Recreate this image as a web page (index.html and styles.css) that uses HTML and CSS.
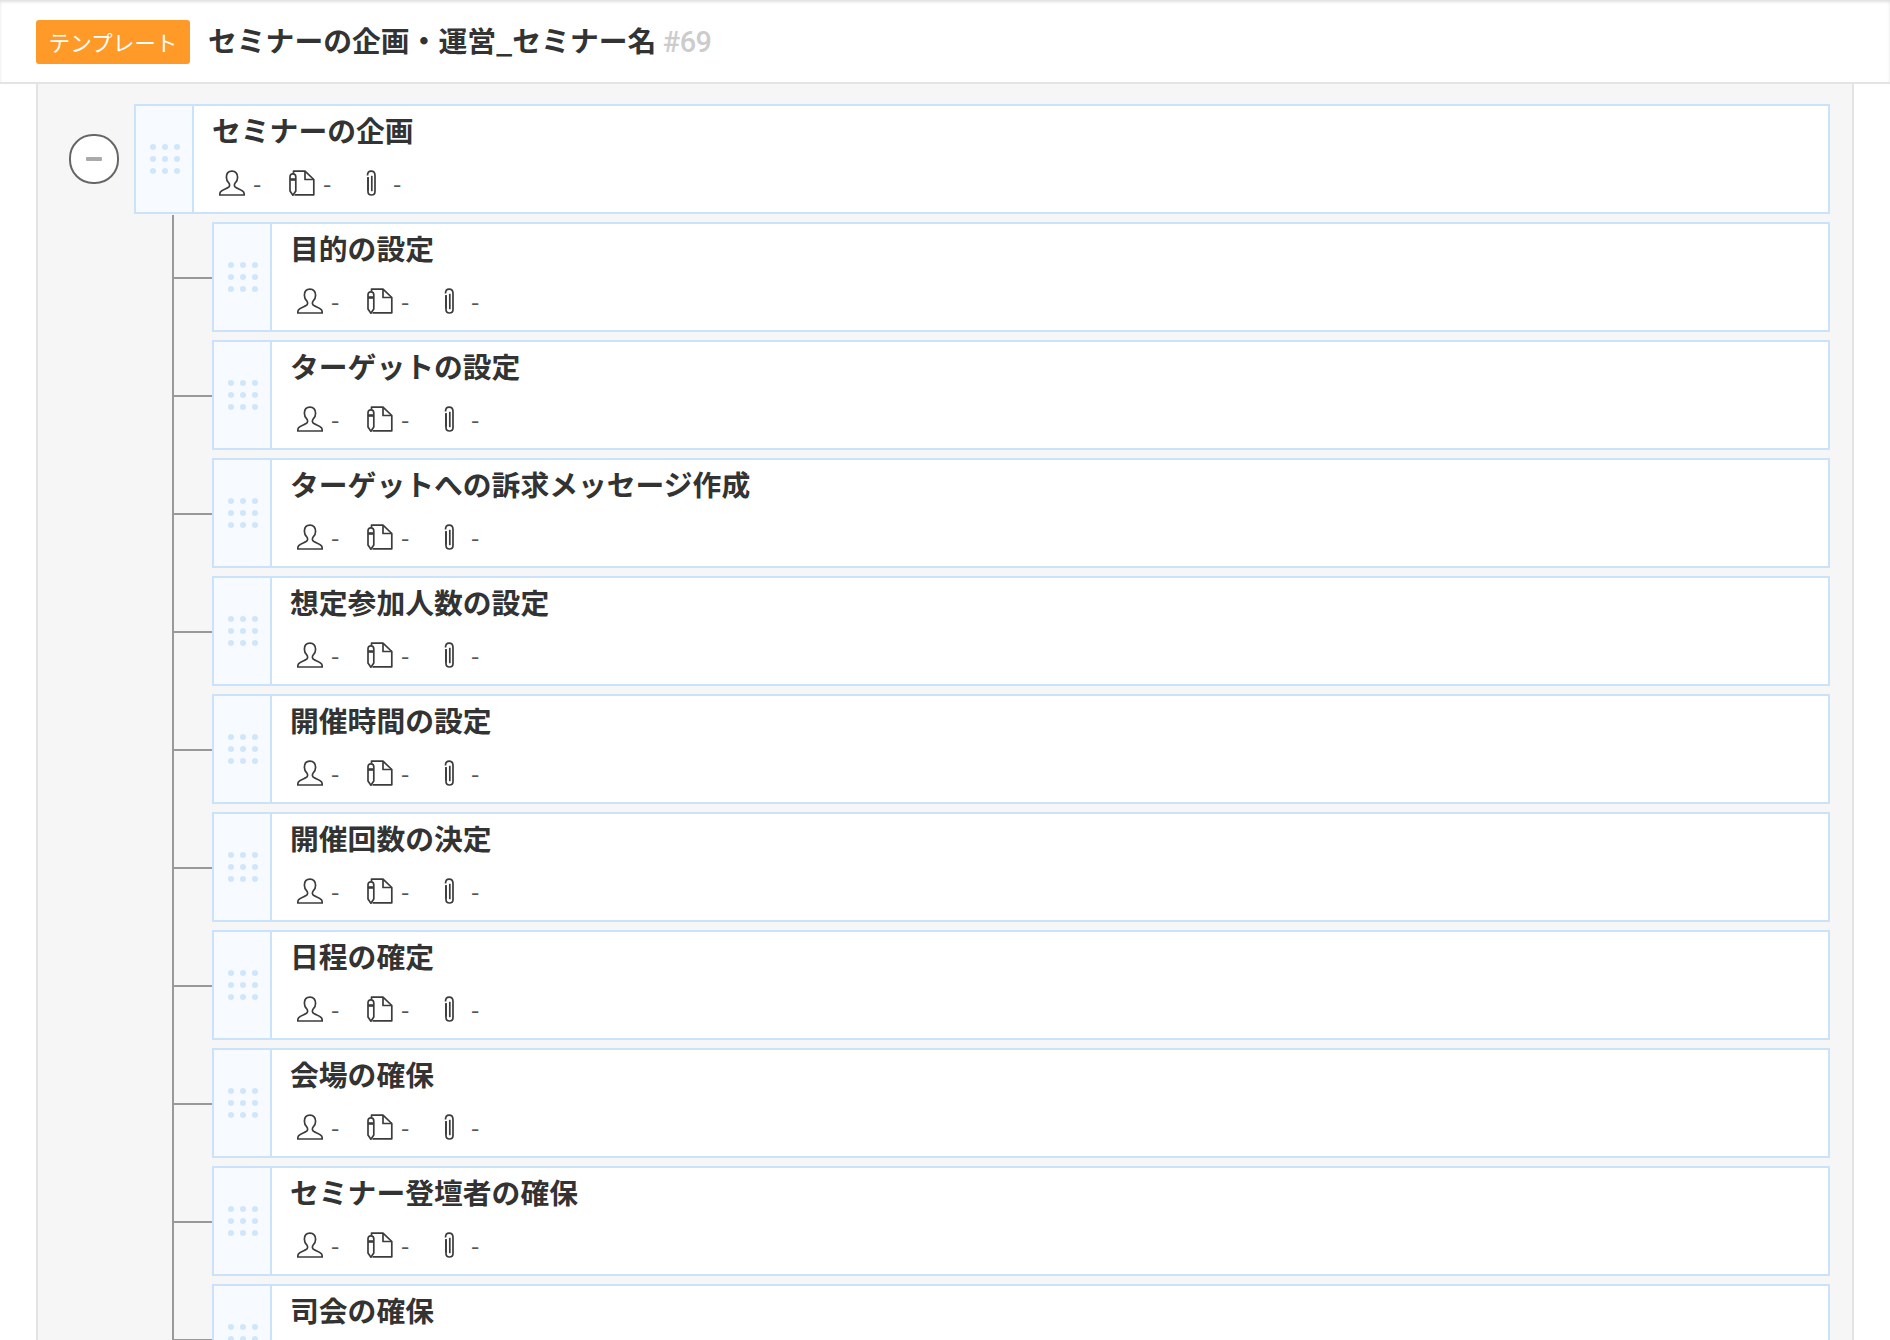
FILE: index.html
```html
<!DOCTYPE html>
<html lang="ja">
<head>
<meta charset="utf-8">
<title>セミナーの企画・運営</title>
<link rel="stylesheet" href="styles.css">
</head>
<body>
<svg class="defs" width="0" height="0" aria-hidden="true">
  <symbol id="i-user" viewBox="0 0 26 26">
    <path d="M13 1.200c-3.600 0-5.600 2.600-5.600 6 0 2.600 1 4.600 2.500 6 .6.6.7 1.300.7 2.200 0 1.100-.7 1.800-1.900 2.400-2.200 1.100-5.600 2-7.100 4-.6.8-.8 1.900-.9 3.200h24.600c-.1-1.300-.3-2.400-.9-3.200-1.500-2-4.900-2.900-7.100-4-1.200-.6-1.900-1.300-1.900-2.400 0-.9.1-1.600.7-2.200 1.500-1.400 2.500-3.400 2.500-6 0-3.400-2-6-5.600-6z"/>
  </symbol>
  <symbol id="i-doc" viewBox="0 0 26 26">
    <path d="M4.500 3.500V1.200h11.500l8.800 8.300v15.300H5.500"/>
    <path d="M16 1.200v8.300h8.800"/>
    <path d="M1 7c0-2 1-3.200 2.900-3.200S6.800 5 6.800 7v14l-2.900 4.200L1 21z"/>
    <path d="M1 9.500h5.800" stroke-width="2.600"/>
  </symbol>
  <symbol id="i-clip" viewBox="0 0 26 26">
    <path d="M9 7.500v14c0 2.200 1.500 3.500 3.500 3.500s3.500-1.300 3.500-3.500V5.500c0-2.700-1.600-4.300-3.900-4.300S8.500 2.800 8.500 5.500"/>
    <path d="M9 7v13.500"/>
    <path d="M12.800 5.800v15.400"/>
  </symbol>
</svg>

<header class="page-head">
  <span class="badge">テンプレート</span>
  <h1 class="page-title">セミナーの企画・運営_セミナー名 <span class="page-id">#69</span></h1>
</header>

<main class="panel">
  <div class="root-row">
    <button class="toggle" type="button" aria-label="折りたたむ"><span class="minus"></span></button>
    <article class="card">
      <div class="handle"><span class="dots"><i></i><i></i><i></i><i></i><i></i><i></i><i></i><i></i><i></i></span></div>
      <div class="body">
        <h2 class="title">セミナーの企画</h2>
        <div class="meta">
          <span class="meta-item"><svg class="icon"><use href="#i-user"/></svg>-</span>
          <span class="meta-item"><svg class="icon"><use href="#i-doc"/></svg>-</span>
          <span class="meta-item"><svg class="icon"><use href="#i-clip"/></svg>-</span>
        </div>
      </div>
    </article>
  </div>

  <div class="children" id="children">
    <article class="card child"><div class="handle"><span class="dots"><i></i><i></i><i></i><i></i><i></i><i></i><i></i><i></i><i></i></span></div><div class="body"><h2 class="title">目的の設定</h2><div class="meta"><span class="meta-item"><svg class="icon"><use href="#i-user"/></svg>-</span><span class="meta-item"><svg class="icon"><use href="#i-doc"/></svg>-</span><span class="meta-item"><svg class="icon"><use href="#i-clip"/></svg>-</span></div></div></article>
    <article class="card child"><div class="handle"><span class="dots"><i></i><i></i><i></i><i></i><i></i><i></i><i></i><i></i><i></i></span></div><div class="body"><h2 class="title">ターゲットの設定</h2><div class="meta"><span class="meta-item"><svg class="icon"><use href="#i-user"/></svg>-</span><span class="meta-item"><svg class="icon"><use href="#i-doc"/></svg>-</span><span class="meta-item"><svg class="icon"><use href="#i-clip"/></svg>-</span></div></div></article>
    <article class="card child"><div class="handle"><span class="dots"><i></i><i></i><i></i><i></i><i></i><i></i><i></i><i></i><i></i></span></div><div class="body"><h2 class="title">ターゲットへの訴求メッセージ作成</h2><div class="meta"><span class="meta-item"><svg class="icon"><use href="#i-user"/></svg>-</span><span class="meta-item"><svg class="icon"><use href="#i-doc"/></svg>-</span><span class="meta-item"><svg class="icon"><use href="#i-clip"/></svg>-</span></div></div></article>
    <article class="card child"><div class="handle"><span class="dots"><i></i><i></i><i></i><i></i><i></i><i></i><i></i><i></i><i></i></span></div><div class="body"><h2 class="title">想定参加人数の設定</h2><div class="meta"><span class="meta-item"><svg class="icon"><use href="#i-user"/></svg>-</span><span class="meta-item"><svg class="icon"><use href="#i-doc"/></svg>-</span><span class="meta-item"><svg class="icon"><use href="#i-clip"/></svg>-</span></div></div></article>
    <article class="card child"><div class="handle"><span class="dots"><i></i><i></i><i></i><i></i><i></i><i></i><i></i><i></i><i></i></span></div><div class="body"><h2 class="title">開催時間の設定</h2><div class="meta"><span class="meta-item"><svg class="icon"><use href="#i-user"/></svg>-</span><span class="meta-item"><svg class="icon"><use href="#i-doc"/></svg>-</span><span class="meta-item"><svg class="icon"><use href="#i-clip"/></svg>-</span></div></div></article>
    <article class="card child"><div class="handle"><span class="dots"><i></i><i></i><i></i><i></i><i></i><i></i><i></i><i></i><i></i></span></div><div class="body"><h2 class="title">開催回数の決定</h2><div class="meta"><span class="meta-item"><svg class="icon"><use href="#i-user"/></svg>-</span><span class="meta-item"><svg class="icon"><use href="#i-doc"/></svg>-</span><span class="meta-item"><svg class="icon"><use href="#i-clip"/></svg>-</span></div></div></article>
    <article class="card child"><div class="handle"><span class="dots"><i></i><i></i><i></i><i></i><i></i><i></i><i></i><i></i><i></i></span></div><div class="body"><h2 class="title">日程の確定</h2><div class="meta"><span class="meta-item"><svg class="icon"><use href="#i-user"/></svg>-</span><span class="meta-item"><svg class="icon"><use href="#i-doc"/></svg>-</span><span class="meta-item"><svg class="icon"><use href="#i-clip"/></svg>-</span></div></div></article>
    <article class="card child"><div class="handle"><span class="dots"><i></i><i></i><i></i><i></i><i></i><i></i><i></i><i></i><i></i></span></div><div class="body"><h2 class="title">会場の確保</h2><div class="meta"><span class="meta-item"><svg class="icon"><use href="#i-user"/></svg>-</span><span class="meta-item"><svg class="icon"><use href="#i-doc"/></svg>-</span><span class="meta-item"><svg class="icon"><use href="#i-clip"/></svg>-</span></div></div></article>
    <article class="card child"><div class="handle"><span class="dots"><i></i><i></i><i></i><i></i><i></i><i></i><i></i><i></i><i></i></span></div><div class="body"><h2 class="title">セミナー登壇者の確保</h2><div class="meta"><span class="meta-item"><svg class="icon"><use href="#i-user"/></svg>-</span><span class="meta-item"><svg class="icon"><use href="#i-doc"/></svg>-</span><span class="meta-item"><svg class="icon"><use href="#i-clip"/></svg>-</span></div></div></article>
    <article class="card child"><div class="handle"><span class="dots"><i></i><i></i><i></i><i></i><i></i><i></i><i></i><i></i><i></i></span></div><div class="body"><h2 class="title">司会の確保</h2></div></article>
  </div>
</main>
</body>
</html>
```
FILE: styles.css
```css
* { box-sizing: border-box; }
html, body {
  margin: 0;
  height: 100vh;
  overflow: hidden;
  background: #fff;
  color: #333;
  font-family: "Noto Sans CJK JP", "Noto Sans", sans-serif;
}
.defs { position: absolute; }

.page-head {
  height: 84px;
  display: flex;
  align-items: center;
  gap: 18px;
  padding: 0 36px;
  border-bottom: 2px solid #e4e4e4;
  box-shadow: inset 0 2px 3px #e0e0e0;
}
.badge {
  width: 154px;
  height: 44px;
  margin-top: 2px;
  display: flex;
  align-items: center;
  justify-content: center;
  background: #ff9a28;
  border-radius: 3px;
  color: #fff;
  font-size: 21.6px;
  line-height: 1;
  white-space: nowrap;
}
.page-title {
  margin: 0;
  font-size: 28.8px;
  font-weight: 700;
  line-height: 40px;
  white-space: nowrap;
}
.page-id {
  font-family: "Roboto", "Noto Sans", sans-serif;
  font-weight: 500;
  letter-spacing: -0.5px;
  color: #ccc;
}

.panel {
  margin: 0 36px;
  height: calc(100vh - 84px);
  padding: 20px 22px 0 0;
  background: #f6f6f6;
  border-left: 2px solid #e4e4e4;
  border-right: 2px solid #e4e4e4;
  overflow: hidden;
}
.root-row {
  display: flex;
  align-items: center;
  gap: 15px;
  padding-left: 31px;
}
.toggle {
  flex: none;
  width: 50px;
  height: 50px;
  padding: 0;
  display: flex;
  align-items: center;
  justify-content: center;
  background: #fff;
  border: 2px solid #666;
  border-radius: 48%;
}
.minus {
  width: 16px;
  height: 4px;
  border-radius: 1px;
  background: #aaa;
}

.card {
  flex: 1;
  height: 110px;
  display: flex;
  background: #fff;
  border: 2px solid #cae3fb;
}
.handle {
  flex: none;
  width: 58px;
  padding-left: 2px;
  display: flex;
  align-items: center;
  justify-content: center;
  background: #f7fbff;
  border-right: 2px solid #cae3fb;
}
.dots {
  display: grid;
  grid-template-columns: repeat(3, 6px);
  gap: 6px;
}
.dots i {
  width: 6px;
  height: 6px;
  border-radius: 50%;
  background: #cfe6fb;
}
.body {
  flex: 1;
  min-width: 0;
  padding: 3px 0 0 18px;
}
.title {
  margin: 0;
  font-size: 28.8px;
  font-weight: 700;
  line-height: 42px;
  white-space: nowrap;
}
.meta {
  display: flex;
  margin-top: 19px;
  padding-left: 7px;
}
.meta-item {
  width: 70px;
  display: flex;
  align-items: center;
  gap: 8px;
  font-size: 24px;
  line-height: 26px;
  color: #555;
}
.icon {
  width: 26px;
  height: 26px;
  flex: none;
  fill: none;
  stroke: #3c3c3c;
  stroke-width: 1.7;
  stroke-linejoin: round;
}

.children {
  margin: 1px 0 0 134px;
  padding: 7px 0 0 38px;
  border-left: 2px solid #999;
}
.child {
  position: relative;
  margin-bottom: 8px;
}
.child::before {
  content: "";
  position: absolute;
  left: -40px;
  top: 53px;
  width: 38px;
  height: 2px;
  background: #999;
}
```
